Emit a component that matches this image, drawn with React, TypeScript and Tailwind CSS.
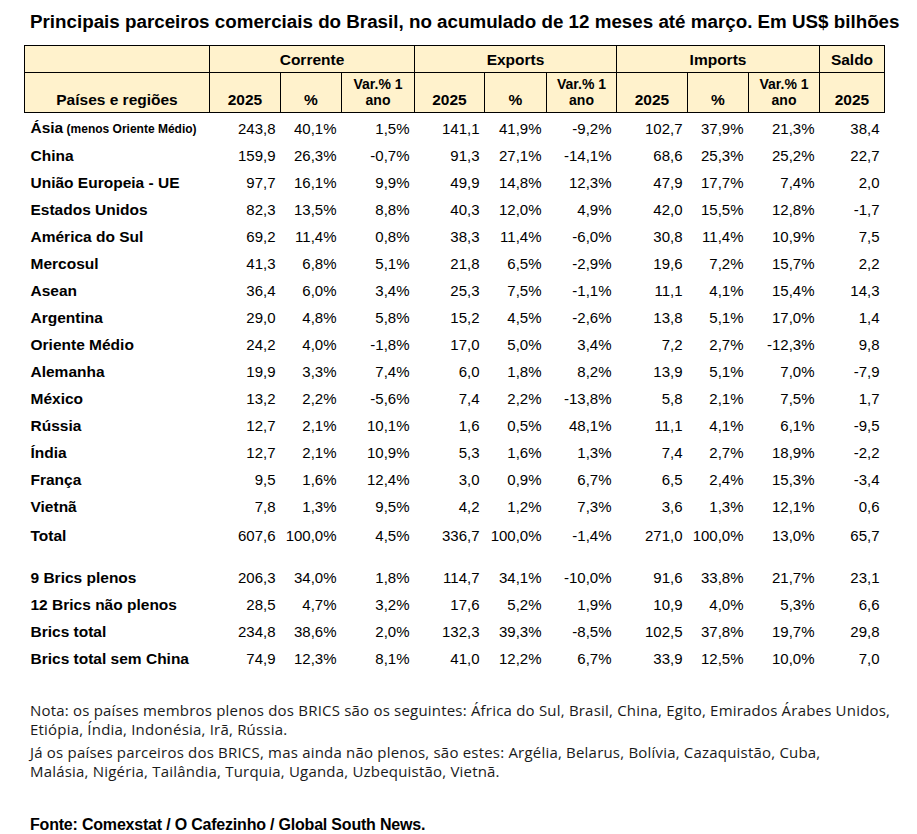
const rows: { name: string; sub?: string; v: string[] }[] = [
  { name: "Ásia", sub: "(menos Oriente Médio)", v: ["243,8", "40,1%", "1,5%", "141,1", "41,9%", "-9,2%", "102,7", "37,9%", "21,3%", "38,4"] },
  { name: "China", v: ["159,9", "26,3%", "-0,7%", "91,3", "27,1%", "-14,1%", "68,6", "25,3%", "25,2%", "22,7"] },
  { name: "União Europeia - UE", v: ["97,7", "16,1%", "9,9%", "49,9", "14,8%", "12,3%", "47,9", "17,7%", "7,4%", "2,0"] },
  { name: "Estados Unidos", v: ["82,3", "13,5%", "8,8%", "40,3", "12,0%", "4,9%", "42,0", "15,5%", "12,8%", "-1,7"] },
  { name: "América do Sul", v: ["69,2", "11,4%", "0,8%", "38,3", "11,4%", "-6,0%", "30,8", "11,4%", "10,9%", "7,5"] },
  { name: "Mercosul", v: ["41,3", "6,8%", "5,1%", "21,8", "6,5%", "-2,9%", "19,6", "7,2%", "15,7%", "2,2"] },
  { name: "Asean", v: ["36,4", "6,0%", "3,4%", "25,3", "7,5%", "-1,1%", "11,1", "4,1%", "15,4%", "14,3"] },
  { name: "Argentina", v: ["29,0", "4,8%", "5,8%", "15,2", "4,5%", "-2,6%", "13,8", "5,1%", "17,0%", "1,4"] },
  { name: "Oriente Médio", v: ["24,2", "4,0%", "-1,8%", "17,0", "5,0%", "3,4%", "7,2", "2,7%", "-12,3%", "9,8"] },
  { name: "Alemanha", v: ["19,9", "3,3%", "7,4%", "6,0", "1,8%", "8,2%", "13,9", "5,1%", "7,0%", "-7,9"] },
  { name: "México", v: ["13,2", "2,2%", "-5,6%", "7,4", "2,2%", "-13,8%", "5,8", "2,1%", "7,5%", "1,7"] },
  { name: "Rússia", v: ["12,7", "2,1%", "10,1%", "1,6", "0,5%", "48,1%", "11,1", "4,1%", "6,1%", "-9,5"] },
  { name: "Índia", v: ["12,7", "2,1%", "10,9%", "5,3", "1,6%", "1,3%", "7,4", "2,7%", "18,9%", "-2,2"] },
  { name: "França", v: ["9,5", "1,6%", "12,4%", "3,0", "0,9%", "6,7%", "6,5", "2,4%", "15,3%", "-3,4"] },
  { name: "Vietnã", v: ["7,8", "1,3%", "9,5%", "4,2", "1,2%", "7,3%", "3,6", "1,3%", "12,1%", "0,6"] },
];

const total = { name: "Total", v: ["607,6", "100,0%", "4,5%", "336,7", "100,0%", "-1,4%", "271,0", "100,0%", "13,0%", "65,7"] };

const brics: { name: string; v: string[] }[] = [
  { name: "9 Brics plenos", v: ["206,3", "34,0%", "1,8%", "114,7", "34,1%", "-10,0%", "91,6", "33,8%", "21,7%", "23,1"] },
  { name: "12 Brics não plenos", v: ["28,5", "4,7%", "3,2%", "17,6", "5,2%", "1,9%", "10,9", "4,0%", "5,3%", "6,6"] },
  { name: "Brics total", v: ["234,8", "38,6%", "2,0%", "132,3", "39,3%", "-8,5%", "102,5", "37,8%", "19,7%", "29,8"] },
  { name: "Brics total sem China", v: ["74,9", "12,3%", "8,1%", "41,0", "12,2%", "6,7%", "33,9", "12,5%", "10,0%", "7,0"] },
];

const widths = [185, 71, 61, 73, 70, 62, 70, 71, 61, 71, 65];
const subHeads = ["2025", "%", "Var.% 1 ano", "2025", "%", "Var.% 1 ano", "2025", "%", "Var.% 1 ano", "2025"];

function DataRow({ name, sub, v }: { name: string; sub?: string; v: string[] }) {
  return (
    <tr className="h-[27px]">
      <td className="pl-[6px] font-bold text-[15.5px] whitespace-nowrap">
        {name}
        {sub && <span className="text-[12px]"> {sub}</span>}
      </td>
      {v.map((x, i) => (
        <td key={i} className="pr-[5px] text-right">
          {x}
        </td>
      ))}
    </tr>
  );
}

function Spacer({ h }: { h: string }) {
  return (
    <tr className={h}>
      <td colSpan={11}></td>
    </tr>
  );
}

export default function App() {
  return (
    <div
      className="w-[917px] h-[834px] bg-white text-black"
      style={{ fontFamily: '"Liberation Sans", Arial, sans-serif' }}
    >
      <h1 className="pl-[30px] pt-[11px] text-[18.8px] leading-[22px] font-bold whitespace-nowrap">
        Principais parceiros comerciais do Brasil, no acumulado de 12 meses até março. Em US$ bilhões
      </h1>

      <table className="ml-[24px] mt-[12px] table-fixed border-collapse text-[15px] leading-[17px]">
        <colgroup>
          {widths.map((w, i) => (
            <col key={i} style={{ width: w }} />
          ))}
        </colgroup>
        <thead className="bg-[#fff2cc] font-bold">
          <tr className="h-[27px] text-[15.5px]">
            <th className="border border-black"></th>
            <th colSpan={3} className="border border-black text-center align-middle">
              Corrente
            </th>
            <th colSpan={3} className="border border-black text-center align-middle">
              Exports
            </th>
            <th colSpan={3} className="border border-black text-center align-middle">
              Imports
            </th>
            <th className="border border-black text-center align-middle">Saldo</th>
          </tr>
          <tr className="h-[40px]">
            <th className="border border-black align-bottom pb-[4px] text-center text-[15.5px]">Países e regiões</th>
            {subHeads.map((h, i) => (
              <th key={i} className="border border-black align-bottom pb-[4px] text-center text-[14px] leading-[16px]">
                {h === "Var.% 1 ano" ? (
                  <>
                    Var.% 1
                    <br />
                    ano
                  </>
                ) : (
                  <span className="text-[15.5px]">{h}</span>
                )}
              </th>
            ))}
          </tr>
        </thead>
        <tbody>
          <Spacer h="h-[2px]" />
          {rows.map((r) => (
            <DataRow key={r.name} {...r} />
          ))}
          <Spacer h="h-[2px]" />
          <DataRow {...total} />
          <Spacer h="h-[15px]" />
          {brics.map((r) => (
            <DataRow key={r.name} {...r} />
          ))}
        </tbody>
      </table>

      <div
        className="pl-[30px] mt-[29px] text-[15px] leading-[19px] tracking-[0.2px] text-[#1a1a1a]"
        style={{ fontFamily: '"Open Sans", sans-serif' }}
      >
        <p className="whitespace-nowrap">
          Nota: os países membros plenos dos BRICS são os seguintes: África do Sul, Brasil, China, Egito, Emirados Árabes Unidos,
          <br />
          Etiópia, Índia, Indonésia, Irã, Rússia.
        </p>
        <p className="mt-[4px] whitespace-nowrap">
          Já os países parceiros dos BRICS, mas ainda não plenos, são estes: Argélia, Belarus, Bolívia, Cazaquistão, Cuba,
          <br />
          Malásia, Nigéria, Tailândia, Turquia, Uganda, Uzbequistão, Vietnã.
        </p>
      </div>

      <p
        className="pl-[30px] mt-[35px] text-[16px] leading-[18px] font-bold tracking-[-0.2px]"
        style={{ fontFamily: '"Liberation Sans Narrow", "Liberation Sans", sans-serif' }}
      >
        Fonte: Comexstat / O Cafezinho / Global South News.
      </p>
    </div>
  );
}
